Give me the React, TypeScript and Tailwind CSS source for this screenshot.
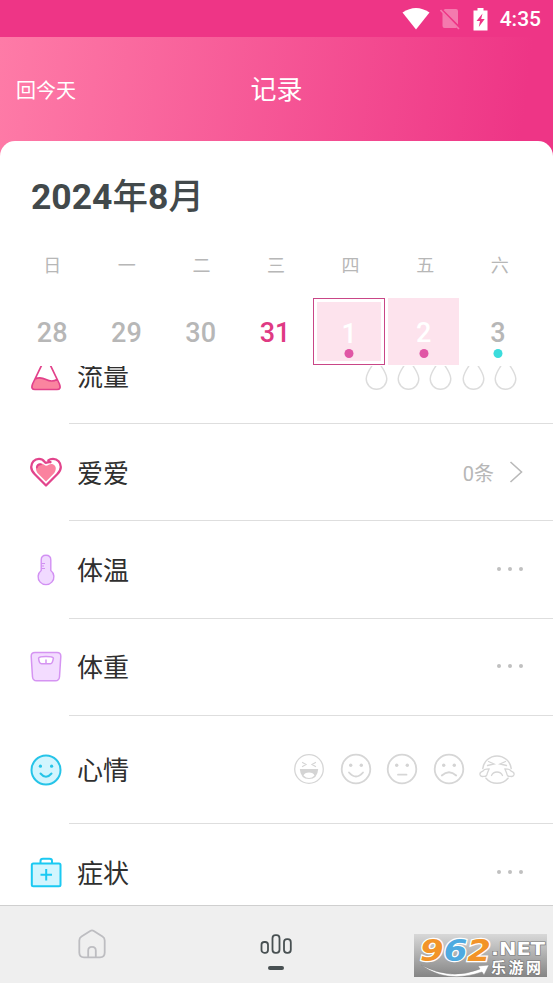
import React from "react";
import clsx from "clsx";

type Day = {
  label: string;
  today?: boolean;
  selected?: boolean;
  period?: boolean;
  dot?: string;
};

const weekdays = ["日", "一", "二", "三", "四", "五", "六"];

const days: Day[] = [
  { label: "28" },
  { label: "29" },
  { label: "30" },
  { label: "31", today: true },
  { label: "1", selected: true, period: true, dot: "bg-[#e056a5]" },
  { label: "2", period: true, dot: "bg-[#e056a5]" },
  { label: "3", dot: "bg-[#3bdcdc]" },
];

const StatusBar: React.FC = () => (
  <div className="flex h-[37px] items-center justify-end bg-[#ee3586] pr-3 text-white">
    <svg className="mr-[10px] h-[22px] w-[28px]" viewBox="0 0 28 22" fill="currentColor">
      <path d="M0.5 4.5Q14 -4.5 27.5 4.5L14 21.5Z" />
    </svg>
    <svg className="mr-[13px] h-[22px] w-[20px]" viewBox="0 0 20 22">
      <path d="M5 1H16Q18 1 18 3V16.5L3.5 2ZM2.5 5V18Q2.5 20 4.5 20H16L17 19Z" fill="#f47aae" />
      <path d="M0.5 2L19 21" stroke="#f47aae" strokeWidth="1.6" />
    </svg>
    <svg className="mr-[12px] h-[24px] w-[15px]" viewBox="0 0 15 24">
      <path d="M4.5 1H10.5V3.5H14.5V23.5H0.5V3.5H4.5Z" fill="white" />
      <path d="M9.5 6.5L3.5 14H7L5.8 20L11.7 12H8.2Z" fill="#ee3586" />
    </svg>
    <span className="pt-[2px] text-[21px] leading-none font-medium">4:35</span>
  </div>
);

const Flask = () => (
  <svg className="h-[36px] w-[32px]" viewBox="0 0 32 36" fill="none">
    <path d="M5.5 21Q10 18.5 16 21.5T26.5 21.5L30 28Q31 31.5 27 31.5H5Q1 31.5 2 28Z" fill="#fa849f" />
    <path
      d="M9.5 1H22.5M11.5 1V7.5L2.6 26Q0.5 31.5 5 31.5H27Q31.5 31.5 29.4 26L20.5 7.5V1M5 21Q10 18.5 16 21.5T27 21.5"
      stroke="#e2418a"
      strokeWidth="1.7"
    />
  </svg>
);

const HeartIcon = () => (
  <svg className="h-[32px] w-[32px]" viewBox="0 1 32 32" fill="none">
    <path d="M16 25.5L7.5 17C4.5 13 6.3 8 10.5 7.6C13.5 7.5 14.5 9.8 16 9.8C18 9.6 19.5 7.8 22 8C26 8.8 27 13 24.3 17Z" fill="#fb829f" />
    <path
      d="M20.5 6.2C18.5 5.5 17.5 6.8 16 6.8C14.5 6.8 14 2.8 9 2.8C4.5 2.8 1.2 6.5 1.2 11C1.2 14 2.8 16.3 4.8 18.3L16 29.5L27.2 18.3C29.5 16 30.8 14 30.8 11C30.8 6.5 27.5 2.8 23 2.8C21 2.8 19.5 3.3 18.3 4.3"
      stroke="#e2448c"
      strokeWidth="2.3"
      strokeLinecap="round"
      strokeLinejoin="round"
    />
    <path d="M6.8 11.5C7.2 9 9 8 11 8.3" stroke="#e2448c" strokeWidth="1.8" strokeLinecap="round" />
  </svg>
);

const Thermometer = () => (
  <svg className="h-[32px] w-[32px]" viewBox="0 0 32 32" fill="none" stroke="#d290f3" strokeWidth="1.4">
    <path d="M11.2 16.5V6Q11.2 1.2 16 1.2T20.8 6V16.5A7.9 7.9 0 1 1 11.2 16.5Z" fill="#f1daff" />
    <path d="M11.5 9.5H15M11.5 12H14M11.5 14.5H15" strokeWidth="1" />
  </svg>
);

const Scale = () => (
  <svg className="h-[32px] w-[32px]" viewBox="0 0 32 32" fill="none" stroke="#d594f2" strokeWidth="1.5">
    <path
      d="M5 1.5H27Q31 1.5 30.8 5.5L29.5 26Q29 29.8 25.5 29.8H6.5Q3 29.8 2.5 26L1.2 5.5Q1 1.5 5 1.5Z"
      fill="#f3dcff"
    />
    <path d="M8.6 7.2Q9 5.5 16 5.5T23.4 7.2Q22.5 12.8 20.5 12.8H11.5Q9 12.5 8.6 7.2Z" fill="white" />
    <path d="M16 12.5V8.5" />
  </svg>
);

const MoodIcon = () => (
  <svg className="h-[32px] w-[32px]" viewBox="0 0 32 32" fill="none" stroke="#26c4e8" strokeWidth="2">
    <circle cx="16" cy="16" r="14.5" fill="#d2f5fe" />
    <circle cx="10.4" cy="12.2" r="1.6" fill="#26c4e8" stroke="none" />
    <circle cx="21.6" cy="12.2" r="1.6" fill="#26c4e8" stroke="none" />
    <path d="M10.5 19.5Q16 26 21.5 19.5" strokeLinecap="round" />
  </svg>
);

const FirstAid = () => (
  <svg className="h-[32px] w-[32px]" viewBox="0 0 32 32" fill="none" stroke="#1bc9f2" strokeWidth="2">
    <rect x="1.8" y="6.5" width="28.7" height="22.7" rx="1.5" fill="#d2f5fe" />
    <path d="M10.5 6V4Q10.5 1.7 13 1.7H19.5Q22 1.7 22 4V6" />
    <path d="M16.2 12V23.5M10.5 17.7H22" />
  </svg>
);

const Drops = () => (
  <div className="mr-[36px] flex gap-[9.3px]">
    {[0, 1, 2, 3, 4].map((n) => (
      <svg key={n} className="h-[36px] w-[23px]" viewBox="0 0 23 36" fill="none" stroke="#dcdcdc" strokeWidth="1.4">
        <path d="M11.5 2C8 8 1.2 15 1.2 21.8C1.2 27.6 5.8 32.2 11.5 32.2S21.8 27.6 21.8 21.8C21.8 15 15 8 11.5 2Z" />
      </svg>
    ))}
  </div>
);

const eyes = (
  <g fill="#d4d4d4" stroke="none">
    <circle cx="10.7" cy="12.3" r="1.7" />
    <circle cx="21.3" cy="12.3" r="1.7" />
  </g>
);

const faces: React.ReactNode[] = [
  <>
    <circle cx="16" cy="16" r="14.3" strokeWidth="1.3" />
    <path d="M9.5 9.5L13 11.5L9.5 13.5M22.5 9.5L19 11.5L22.5 13.5" strokeWidth="1.2" />
    <path d="M6.8 16H25.2Q24.5 26 16 26T6.8 16Z" fill="#d4d4d4" stroke="none" />
    <path d="M10.5 22.5Q11.5 19.5 16 19.5T21.5 22.5Q19 25 16 25T10.5 22.5Z" fill="white" stroke="none" />
  </>,
  <>
    <circle cx="16" cy="16" r="14.3" />
    {eyes}
    <path d="M9 19.5Q16 27.5 23 19.5" />
  </>,
  <>
    <circle cx="16" cy="16" r="14.3" />
    {eyes}
    <path d="M12 21.7H20.5" />
  </>,
  <>
    <circle cx="16" cy="16" r="14.3" />
    {eyes}
    <path d="M8.8 22.5Q16 16 23.2 22.5" />
  </>,
  <>
    <path d="M1.8 15.5A14.3 14.3 0 0 1 30.2 15.5M5 25.2A14.3 14.3 0 0 0 27 25.2" strokeWidth="1.5" />
    <path d="M7.5 8.5L13 11L6.5 12.5M24.5 8.5L19 11L25.5 12.5M10.5 22.5Q12 19 16 19T21.5 22.5" strokeWidth="1.3" />
    <path
      d="M8.2 15.8Q2.5 16 1.8 18.2Q-1.8 19.5-.9 22Q0 24 2.5 23.3Q6 24 6.3 20.2ZM23.8 15.8Q29.5 16 30.2 18.2Q33.8 19.5 32.9 22Q32 24 29.5 23.3Q26 24 25.7 20.2Z"
      strokeWidth="1.3"
      strokeLinejoin="round"
    />
  </>,
];

const Moods = () => (
  <div className="mr-[42px] flex gap-[14.4px]">
    {faces.map((face, i) => (
      <svg
        key={i}
        className={clsx("h-8 w-8 overflow-visible", i === 4 && "translate-x-[2px]")}
        viewBox="0 0 32 32"
        fill="none"
        stroke="#d6d6d6"
        strokeWidth="1.8"
        strokeLinecap="round"
      >
        {face}
      </svg>
    ))}
  </div>
);

const More = () => (
  <div className="mr-[30px] mb-px flex gap-[7px]">
    {[0, 1, 2].map((n) => (
      <span key={n} className="size-1 rounded-full bg-[#c0c0c0]" />
    ))}
  </div>
);

const Count = () => (
  <div className="mr-[30px] flex items-center text-[20px] text-[#b7b7b7]">
    <span className="mr-[15px] pt-[3px]">0条</span>
    <svg className="h-[22px] w-[14px]" viewBox="0 0 14 22" fill="none" stroke="#b9b9b9" strokeWidth="1.6">
      <path d="M1.5 1L12.5 11L1.5 21" />
    </svg>
  </div>
);

type RowProps = {
  icon: React.ReactNode;
  label: string;
  children: React.ReactNode;
  className?: string;
};

const Row: React.FC<RowProps> = ({ icon, label, children, className = "h-[97.3px]" }) => (
  <div className={clsx("flex shrink-0 pl-[30px]", className)}>
    <div className="flex w-[39px] items-center">{icon}</div>
    <div className="flex flex-1 items-center justify-between border-b border-[#dedede] pl-2">
      <span className="pt-[3px] text-[26px] leading-[34px] text-[#2f2f2f]">{label}</span>
      {children}
    </div>
  </div>
);

// site badge in the corner of the tab bar
const SiteBadge = () => (
  <svg className="absolute right-[5px] bottom-[5px] h-[45px] w-[135px]" viewBox="0 0 135 45">
    <defs>
      <linearGradient id="badge" x1="0" y1="0" x2="0" y2="1">
        <stop offset="0" stopColor="#d8d8d8" />
        <stop offset="1" stopColor="#858585" />
      </linearGradient>
    </defs>
    <rect x="1" y="1" width="133" height="43" fill="url(#badge)" />
    <text
      x="7"
      y="28"
      fontFamily="DejaVu Sans, sans-serif"
      fontWeight="bold"
      fontStyle="italic"
      fontSize="31"
      textLength="71"
      lengthAdjust="spacingAndGlyphs"
      stroke="white"
      strokeWidth="2.5"
      paintOrder="stroke"
    >
      <tspan fill="#f29428">9</tspan>
      <tspan fill="#4eaae0">6</tspan>
      <tspan fill="#f29428">2</tspan>
    </text>
    <path d="M8 32Q38 48 67 36L65 33L76 32L71 42L69 39Q34 51 8 32Z" fill="white" stroke="#888" strokeWidth=".5" />
    <g fill="white" stroke="#777" strokeWidth="1.2" paintOrder="stroke" fontWeight="bold">
      <text
        x="78"
        y="22"
        fontFamily="DejaVu Sans, sans-serif"
        fontSize="17"
        textLength="54"
        lengthAdjust="spacingAndGlyphs"
      >
        .NET
      </text>
      <text x="78" y="40" fontFamily="Noto Sans CJK SC, sans-serif" fontSize="15" textLength="50">
        乐游网
      </text>
    </g>
  </svg>
);

const TabBar: React.FC = () => (
  <div className="relative h-[78px] shrink-0 border-t border-[#cfcfcf] bg-[#efefef]">
    <div className="grid h-full grid-cols-3">
      <div className="flex justify-center pt-[23px]">
        <svg className="h-[30px] w-[28px]" viewBox="0 0 28 30" fill="none" stroke="#bdbdc1" strokeWidth="1.8">
          <path d="M12.2 1.9Q14 .8 15.8 1.9L24.5 7.6Q26.7 9 26.7 11.5V23.5Q26.7 28.3 22 28.3H6Q1.3 28.3 1.3 23.5V11.5Q1.3 9 3.5 7.6Z" />
          <path d="M10.2 28V21.5Q10.2 17.8 14 17.8T17.8 21.5V28" />
        </svg>
      </div>
      <div className="flex flex-col items-center pt-[28px]">
        <svg className="h-[20px] w-[32px]" viewBox="0 0 32 20" fill="none" stroke="#485052" strokeWidth="1.8">
          <rect x="1.5" y="8" width="6.5" height="10.8" rx="2.8" />
          <rect x="12.5" y="1.2" width="7" height="17.6" rx="3" />
          <rect x="24" y="5.2" width="6.8" height="13.6" rx="3" />
        </svg>
        <span className="mt-[12px] h-[4px] w-[16px] rounded-full bg-[#485052]" />
      </div>
    </div>
    <SiteBadge />
  </div>
);

const App: React.FC = () => {
  return (
    <div className="flex h-[983px] w-[553px] flex-col overflow-hidden bg-white font-[Roboto,'Noto_Sans_CJK_SC',sans-serif]">
      <StatusBar />
      <div className="flex flex-1 flex-col overflow-hidden bg-[linear-gradient(97deg,#fe7ba7_0px,#ee3586_530px)]">
        <div className="grid h-[104px] shrink-0 grid-cols-3 items-center pt-[3px] text-white">
          <span className="pl-4 text-[20px]">回今天</span>
          <h1 className="text-center text-[26px]">记录</h1>
        </div>
        <div className="flex flex-1 flex-col overflow-hidden rounded-t-[15px] bg-white">
          <h2 className="mt-[30px] pl-[31px] text-[35.5px] leading-[52px] font-bold text-[#42494b]">
            2024<span className="font-medium">年</span>8<span className="font-medium">月</span>
          </h2>
          <div className="mt-[33px] ml-[15px] grid w-[522px] grid-cols-7 text-center text-[18px] leading-[20px] text-[#b7b7b7]">
            {weekdays.map((day) => (
              <span key={day}>{day}</span>
            ))}
          </div>
          <div className="mt-[22px] ml-[15px] grid h-[68px] w-[520px] shrink-0 grid-cols-7">
            {days.map((day) => (
              <div
                key={day.label}
                className={clsx(
                  "relative flex h-[67px] justify-center pt-[17px] text-[27px] leading-[36px] font-medium",
                  day.today ? "text-[#df3a83]" : day.period ? "text-white" : "text-[#b7b7b7]",
                  day.selected
                    ? "mx-px border border-[#c94687] bg-[#fde3ed] pt-[16px] shadow-[inset_0_0_0_3px_white]"
                    : "mx-[1.5px]",
                  day.period && !day.selected && "bg-[#fde3ed]"
                )}
              >
                {day.label}
                {day.dot && (
                  <span
                    className={clsx(
                      "absolute left-1/2 size-[9px] -translate-x-1/2 rounded-full",
                      day.selected ? "bottom-[6px]" : "bottom-[7px]",
                      day.dot
                    )}
                  />
                )}
              </div>
            ))}
          </div>
          <div className="flex flex-1 flex-col overflow-hidden">
            <Row icon={<Flask />} label="流量" className="-mt-[39px] h-[97px]">
              <Drops />
            </Row>
            <Row icon={<HeartIcon />} label="爱爱">
              <Count />
            </Row>
            <Row icon={<Thermometer />} label="体温">
              <More />
            </Row>
            <Row icon={<Scale />} label="体重">
              <More />
            </Row>
            <Row icon={<MoodIcon />} label="心情" className="h-[108px]">
              <Moods />
            </Row>
            <Row icon={<FirstAid />} label="症状">
              <More />
            </Row>
          </div>
        </div>
      </div>
      <TabBar />
    </div>
  );
};

export default App;
